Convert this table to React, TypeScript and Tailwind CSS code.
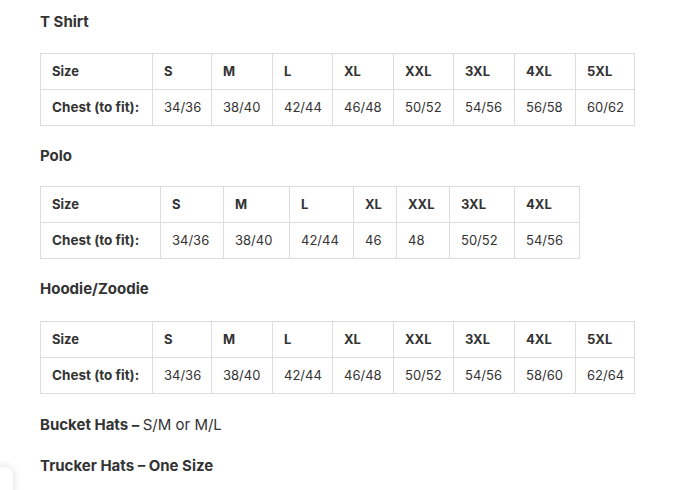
import React from "react";

type Chart = {
  title: string;
  sizes: string[];
  chest: string[];
  widths: number[];
  top: string;
  gap: string;
};

const charts: Chart[] = [
  {
    title: "T Shirt",
    sizes: ["S", "M", "L", "XL", "XXL", "3XL", "4XL", "5XL"],
    chest: ["34/36", "38/40", "42/44", "46/48", "50/52", "54/56", "56/58", "60/62"],
    widths: [112, 59, 61, 60, 61, 60, 61, 61, 59],
    top: "mt-[12px]",
    gap: "mt-[21px]",
  },
  {
    title: "Polo",
    sizes: ["S", "M", "L", "XL", "XXL", "3XL", "4XL"],
    chest: ["34/36", "38/40", "42/44", "46", "48", "50/52", "54/56"],
    widths: [120, 63, 66, 64, 43, 53, 65, 65],
    top: "mt-[20px]",
    gap: "mt-[20px]",
  },
  {
    title: "Hoodie/Zoodie",
    sizes: ["S", "M", "L", "XL", "XXL", "3XL", "4XL", "5XL"],
    chest: ["34/36", "38/40", "42/44", "46/48", "50/52", "54/56", "58/60", "62/64"],
    widths: [112, 59, 61, 60, 61, 60, 61, 61, 59],
    top: "mt-[20px]",
    gap: "mt-[22px]",
  },
];

function SizeTable({ chart }: { chart: Chart }) {
  return (
    <table className={`${chart.gap} table-fixed border-collapse text-[13px] text-[#333]`}>
      <colgroup>
        {chart.widths.map((w, i) => (
          <col key={i} style={{ width: w }} />
        ))}
      </colgroup>
      <tbody>
        <tr className="h-[36px]">
          <td className="border border-[#dcdcdc] pl-[11px] font-bold">Size</td>
          {chart.sizes.map((s) => (
            <td key={s} className="border border-[#dcdcdc] pl-[11px] font-bold">
              {s}
            </td>
          ))}
        </tr>
        <tr className="h-[36px]">
          <td className="border border-[#dcdcdc] pl-[11px] text-[13.5px] font-bold">Chest (to fit):</td>
          {chart.chest.map((c, i) => (
            <td key={i} className="border border-[#dcdcdc] pl-[11px]">
              {c}
            </td>
          ))}
        </tr>
      </tbody>
    </table>
  );
}

export default function App() {
  return (
    <div className="relative h-[490px] w-[685px] overflow-hidden bg-white font-['Inter',sans-serif] text-[#333]">
      <div className="pl-[40px]">
        {charts.map((chart) => (
          <div key={chart.title}>
            <h3 className={`${chart.top} text-[15px] leading-[20px] font-bold`}>{chart.title}</h3>
            <SizeTable chart={chart} />
          </div>
        ))}
        <p className="mt-[21px] text-[15px] leading-[20px]">
          <span className="font-bold">Bucket Hats – </span>S/M or M/L
        </p>
        <p className="mt-[21px] text-[15px] leading-[20px] font-bold">Trucker Hats – One Size</p>
      </div>
      <div className="absolute left-[-20px] top-[467px] h-[40px] w-[33px] rounded-[8px] bg-white shadow-[0_0_8px_rgba(0,0,0,0.15)]" />
    </div>
  );
}
